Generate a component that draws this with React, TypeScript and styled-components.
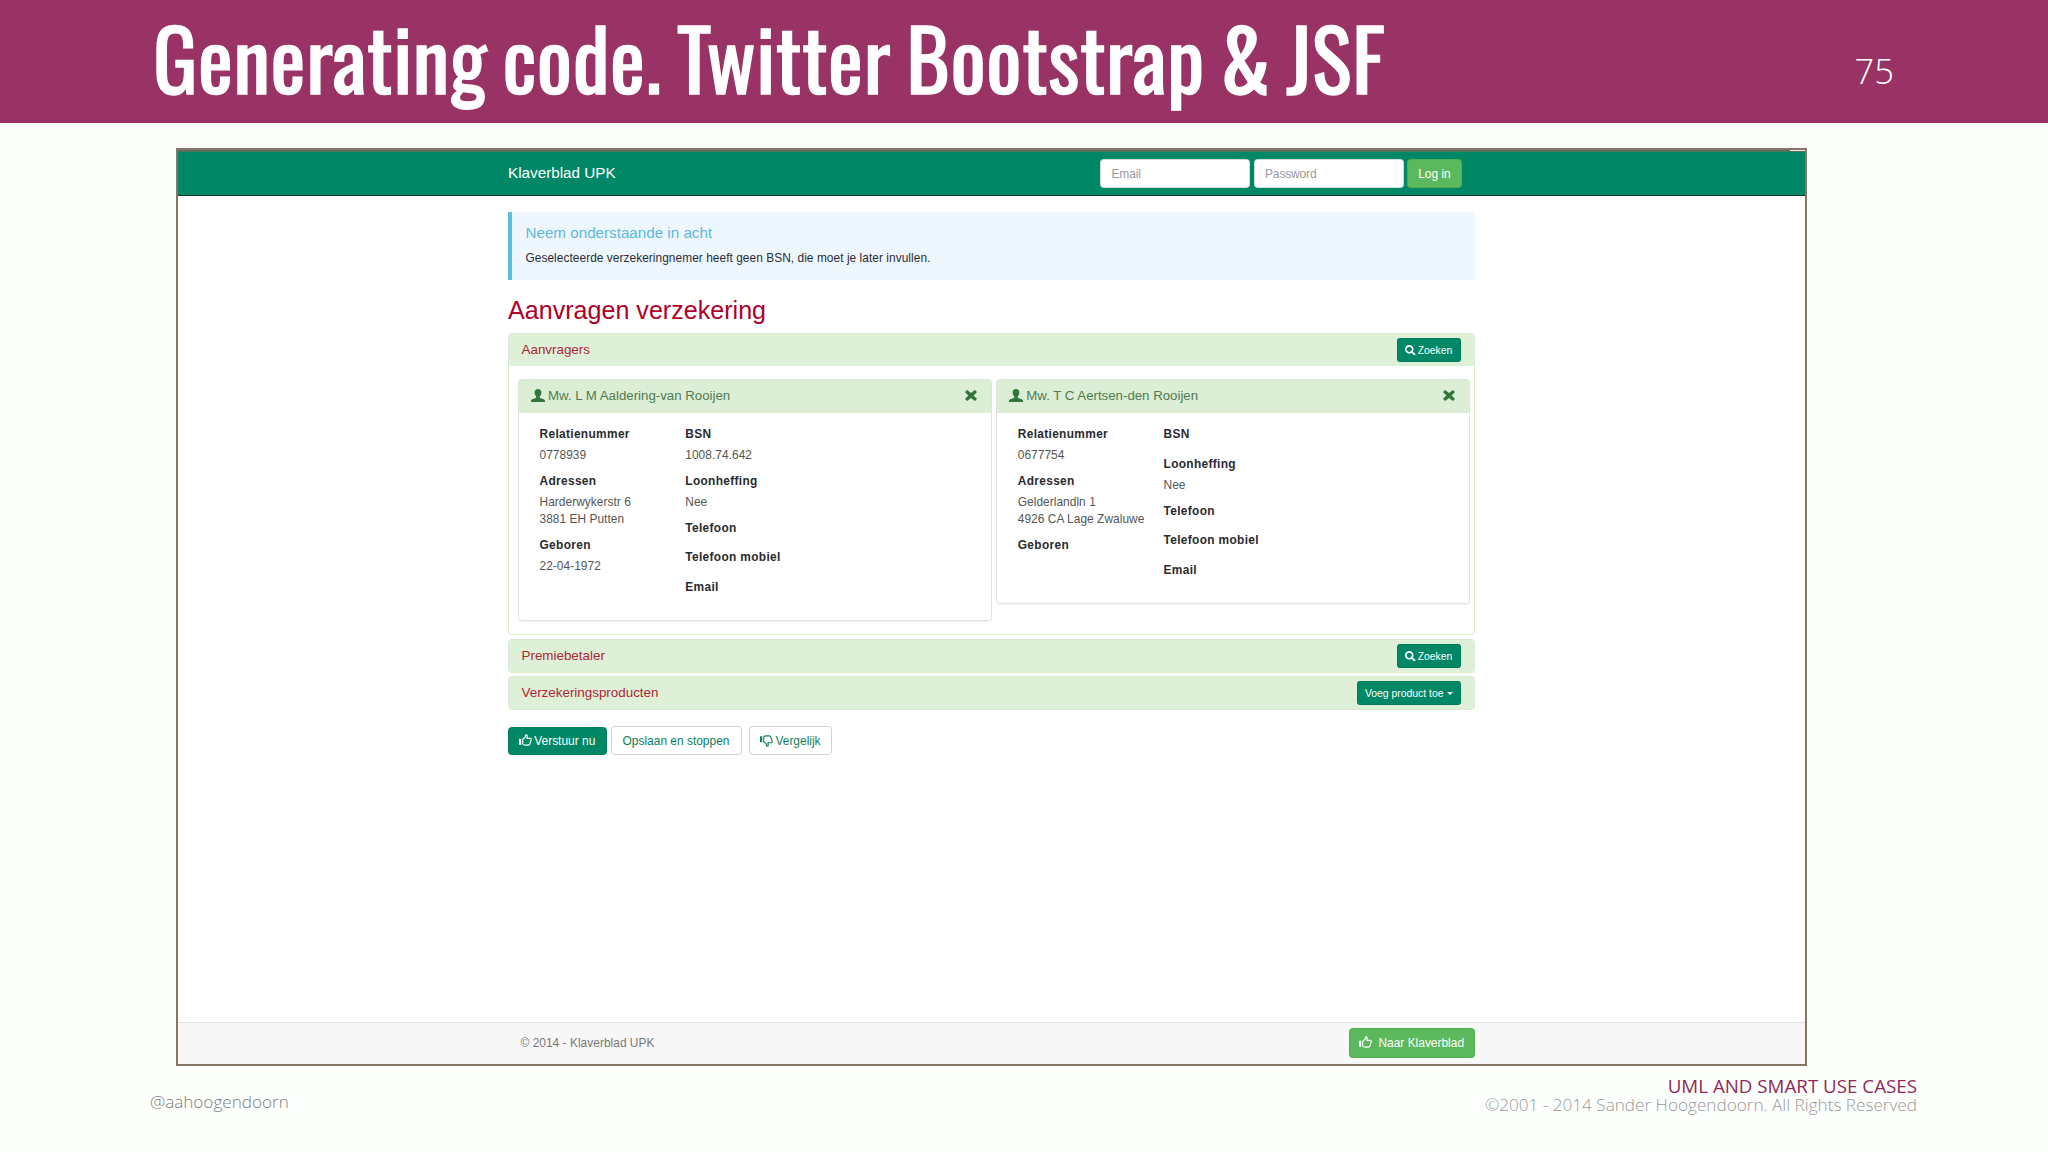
import React from 'react';
import styled, { createGlobalStyle } from 'styled-components';
import { FaSearch } from 'react-icons/fa';

const GlobalStyle = createGlobalStyle`
  * { box-sizing: border-box; }
  body { margin: 0; background: #fdfffd; }
  h1, h2, h3, h4, p, dl, dt, dd { margin: 0; font-weight: 400; }
`;

const sans = '"Liberation Sans", Arial, sans-serif';
const openSans = '"Open Sans", sans-serif';

/* ---------- slide ---------- */
const Slide = styled.div`
  width: 2048px;
  height: 1152px;
  overflow: hidden;
  display: flex;
  flex-direction: column;
  background: #fdfffd;
`;
const SlideHeader = styled.header`
  height: 123px;
  padding: 0 154px 0 153px;
  display: flex;
  justify-content: space-between;
  background: #993265;
  color: #fff;
`;
const SlideTitle = styled.h1`
  font: 400 83px/113px Oswald, "Open Sans", sans-serif;
  letter-spacing: 0.6px;
  word-spacing: -4.2px;
  -webkit-text-stroke: 1.3px #fff;
  white-space: nowrap;
`;
const PageNumber = styled.span`
  font: 300 34.5px/142px ${openSans};
`;
const SlideFooter = styled.footer`
  display: flex;
  justify-content: space-between;
  padding: 11px 131px 0 150px;
`;
const Handle = styled.span`
  margin-top: 11.5px;
  font: 300 17.1px/26px ${openSans};
  color: #7c7e7c;
`;
const Credits = styled.div`
  text-align: right;
  font: 300 17.15px/18px ${openSans};
  color: #9b989e;
`;
const Course = styled.p`
  font-size: 18.75px;
  line-height: 18.5px;
  color: #8f2a58;
`;

/* ---------- browser page ---------- */
const Frame = styled.main`
  flex: none;
  width: 1631px;
  height: 918px;
  margin: 25px 0 0 176px;
  border: 2px solid #857767;
  display: flex;
  flex-direction: column;
  background: #fefffe;
  font: 11.9px/17px ${sans};
  color: #333;
`;
const TopEdge = styled.div`
  flex: none;
  height: 2px;
  display: flex;
  justify-content: flex-end;
  background: #55705c;
  &::after { content: ''; width: 15px; height: 1px; background: #f4e6dc; }
`;
const Container = styled.div`
  width: 967px;
  margin: 0 auto;
`;
const Navbar = styled.nav`
  flex: none;
  height: 44px;
  background: #008866;
  border-bottom: 1px solid #10382e;
`;
const NavRow = styled(Container)`
  height: 43px;
  padding: 0 13px 0 0;
  display: flex;
  align-items: center;
  gap: 3.5px;
`;
const Brand = styled.span`
  margin-right: auto;
  padding-bottom: 2px;
  font-size: 15.25px;
  color: #fff;
`;
const Input = styled.input`
  width: 150px;
  height: 29px;
  padding: 0 10.5px;
  border: 1px solid #d5ddd9;
  border-radius: 3.5px;
  background: #fff;
  font: 12px/17px ${sans};
  letter-spacing: -0.15px;
  &::placeholder { color: #999; opacity: 1; }
`;

type Tone = 'green' | 'success' | 'plain';
const tones: Record<Tone, [string, string, string]> = {
  green: ['#008866', '#007d5c', '#fff'],
  success: ['#5cb85c', '#4fae50', '#fff'],
  plain: ['#fff', '#d0d2d0', '#0d805f'],
};
const Button = styled.button<{ $tone: Tone; $w: number; $h: number; $small?: boolean; $gap?: number }>`
  flex: none;
  width: ${p => p.$w}px;
  height: ${p => p.$h}px;
  padding: ${p => (p.$small ? 0 : 1)}px 0 0;
  display: inline-flex;
  align-items: center;
  justify-content: center;
  gap: ${p => p.$gap ?? 2}px;
  border: 1px solid ${p => tones[p.$tone][1]};
  border-radius: ${p => (p.$small ? 2.5 : 3.5)}px;
  background: ${p => tones[p.$tone][0]};
  color: ${p => tones[p.$tone][2]};
  font: ${p => (p.$small ? 10.4 : 11.95)}px/17px ${sans};
  white-space: nowrap;
`;
const Caret = styled.i`
  margin-left: 1px;
  border: 3px solid transparent;
  border-top-color: currentColor;
  border-bottom: 0;
`;

const Callout = styled.section`
  height: 67.5px;
  margin-top: 16px;
  padding: 12px 13.5px;
  border-left: 4.5px solid #5bc0de;
  background: #eef7fd;
  color: #2c2c34;
`;
const CalloutTitle = styled.h4`
  margin-bottom: 9px;
  font-size: 15.2px;
  line-height: 17px;
  color: #5db9dc;
`;
const CalloutText = styled.p`
  letter-spacing: 0.05px;
  line-height: 17px;
`;
const PageTitle = styled.h2`
  margin: 16.5px 0 9px;
  font-size: 25.1px;
  line-height: 28px;
  color: #b00028;
`;

const Panel = styled.section`
  margin-bottom: 3px;
  border: 1px solid #dbe8d2;
  border-radius: 3.5px;
  &:has(article) { margin-bottom: 4px; }
`;
const PanelHeading = styled.header`
  height: 32px;
  padding: 0 13px 0 12.5px;
  display: flex;
  align-items: center;
  justify-content: space-between;
  background: #dff0d8;
  border-radius: 2.5px;
`;
const PanelTitle = styled.h3`
  padding-bottom: 1px;
  font-size: 13.4px;
  color: #ab2635;
`;
const PanelBody = styled.div`
  height: 268px;
  padding: 12.5px 4px 0 8.5px;
  display: flex;
  align-items: flex-start;
  gap: 4px;
`;

const Card = styled.article`
  flex: 1;
  border: 1px solid #dfe5da;
  border-radius: 3.5px;
  box-shadow: 0 1px 1px rgba(0, 0, 0, 0.06);
`;
const CardHeading = styled.header`
  height: 33px;
  padding: 0 14px 1px 12.5px;
  display: flex;
  align-items: center;
  background: #dcefd6;
  color: #32763a;
`;
const CardTitle = styled.h4`
  flex: 1;
  margin-left: 3px;
  font-size: 13.25px;
  color: #50794f;
`;
const CardBody = styled.div`
  padding: 13.5px 21px 11px;
  display: flex;
`;
const Fields = styled.dl`
  width: 145.8px;
  display: flex;
  flex-direction: column;
`;
const Label = styled.dt`
  margin-bottom: 4.25px;
  font-weight: 700;
  letter-spacing: 0.34px;
  white-space: nowrap;
  color: #2b2b30;
`;
const Value = styled.dd`
  margin-bottom: 8.5px;
  letter-spacing: 0.05px;
  white-space: nowrap;
  color: #555;
`;

const Actions = styled.div`
  margin-top: 16px;
  display: flex;
  align-items: center;
`;
const Gap = styled.span<{ $w: number }>`
  width: ${p => p.$w}px;
`;

const PageFooter = styled.footer`
  flex: none;
  height: 42px;
  margin-top: auto;
  background: #f7f7f8;
  border-top: 1px solid #e3e3e5;
`;
const FooterRow = styled(Container)`
  height: 41px;
  padding: 0 0 1px 12.5px;
  display: flex;
  align-items: center;
  justify-content: space-between;
  letter-spacing: 0.04px;
  color: #777;
`;

const UserIcon = () => (
  <svg width="14" height="13" viewBox="0 0 14 13" fill="currentColor">
    <path d="M7 0C4.9 0 3.6 1.3 3.6 3.2c0 1.900.6 3.200 1.600 4.100v1c0 .5-.3.8-.8 1L1.200 10.300C.4 10.700 0 11.200 0 12V13h14v-1c0-.8-.4-1.300-1.200-1.700L9.600 9.300c-.5-.2-.8-.5-.8-1v-1c1-.9 1.600-2.200 1.600-4.100C10.400 1.300 9.100 0 7 0z" />
  </svg>
);
const RemoveIcon = () => (
  <svg width="12" height="11" viewBox="0 0 12 11" fill="currentColor">
    <path d="M2.500.2 6 3.100 9.500.2Q9.900 0 10.200.2L11.700 1.700Q12 2 11.700 2.400L8.600 5.500 11.700 8.600Q12 9 11.700 9.300L10.200 10.800Q9.900 11 9.500 10.800L6 7.900 2.500 10.800Q2.100 11 1.800 10.800L.3 9.300Q0 9 .3 8.600L3.400 5.500.3 2.400Q0 2 .3 1.700L1.800.2Q2.100 0 2.500.2z" />
  </svg>
);
const ThumbSvg = styled.svg<{ $down?: boolean }>`
  margin-bottom: ${p => (p.$down ? 1 : 3)}px;
  transform: ${p => (p.$down ? 'scaleY(-1)' : 'none')};
`;
const ThumbIcon = ({ down }: { down?: boolean }) => (
  <ThumbSvg $down={down} width="13" height="12" viewBox="0 0 13 12" fill="none" stroke="currentColor" strokeWidth="1.15" strokeLinejoin="round">
    <path d="M0 4.800h2.200v6H0z" fill="currentColor" stroke="none" />
    <path d="M3.700 5.300 6.200 3.100 6.600 1.100Q7.900.3 8.300 1.900L7.800 4.300H11.200Q12.500 4.600 12.200 5.900L10.900 9.900Q10.500 11.100 9.400 11.100H6Q5 11.100 3.700 10.100z" />
  </ThumbSvg>
);

type Field = [string, string[]];
interface Person { name: string; left: Field[]; right: Field[] }

const people: Person[] = [
  {
    name: 'Mw. L M Aaldering-van Rooijen',
    left: [
      ['Relatienummer', ['0778939']],
      ['Adressen', ['Harderwykerstr 6', '3881 EH Putten']],
      ['Geboren', ['22-04-1972']],
    ],
    right: [['BSN', ['1008.74.642']], ['Loonheffing', ['Nee']], ['Telefoon', []], ['Telefoon mobiel', []], ['Email', []]],
  },
  {
    name: 'Mw. T C Aertsen-den Rooijen',
    left: [
      ['Relatienummer', ['0677754']],
      ['Adressen', ['Gelderlandln 1', '4926 CA Lage Zwaluwe']],
      ['Geboren', []],
    ],
    right: [['BSN', []], ['Loonheffing', ['Nee']], ['Telefoon', []], ['Telefoon mobiel', []], ['Email', []]],
  },
];

const FieldList = ({ fields }: { fields: Field[] }) => (
  <Fields>
    {fields.map(([label, lines]) => (
      <React.Fragment key={label}>
        <Label>{label}</Label>
        <Value>{lines.map(line => <div key={line}>{line}</div>)}</Value>
      </React.Fragment>
    ))}
  </Fields>
);

const SearchButton = () => (
  <Button $tone="green" $w={64.5} $h={24} $small>
    <FaSearch size={10.5} />Zoeken
  </Button>
);

export default function App() {
  return (
    <Slide>
      <GlobalStyle />
      <SlideHeader>
        <SlideTitle>Generating code. Twitter Bootstrap &amp; JSF</SlideTitle>
        <PageNumber>75</PageNumber>
      </SlideHeader>

      <Frame>
        <TopEdge />
        <Navbar>
          <NavRow>
            <Brand>Klaverblad UPK</Brand>
            <Input placeholder="Email" />
            <Input placeholder="Password" />
            <Button $tone="success" $w={55} $h={29}>Log in</Button>
          </NavRow>
        </Navbar>

        <Container>
          <Callout>
            <CalloutTitle>Neem onderstaande in acht</CalloutTitle>
            <CalloutText>Geselecteerde verzekeringnemer heeft geen BSN, die moet je later invullen.</CalloutText>
          </Callout>
          <PageTitle>Aanvragen verzekering</PageTitle>

          <Panel>
            <PanelHeading>
              <PanelTitle>Aanvragers</PanelTitle>
              <SearchButton />
            </PanelHeading>
            <PanelBody>
              {people.map(person => (
                <Card key={person.name}>
                  <CardHeading>
                    <UserIcon />
                    <CardTitle>{person.name}</CardTitle>
                    <RemoveIcon />
                  </CardHeading>
                  <CardBody>
                    <FieldList fields={person.left} />
                    <FieldList fields={person.right} />
                  </CardBody>
                </Card>
              ))}
            </PanelBody>
          </Panel>
          <Panel>
            <PanelHeading>
              <PanelTitle>Premiebetaler</PanelTitle>
              <SearchButton />
            </PanelHeading>
          </Panel>
          <Panel>
            <PanelHeading>
              <PanelTitle>Verzekeringsproducten</PanelTitle>
              <Button $tone="green" $w={104.5} $h={24} $small>
                Voeg product toe<Caret />
              </Button>
            </PanelHeading>
          </Panel>

          <Actions>
            <Button $tone="green" $w={98.5} $h={28}><ThumbIcon />Verstuur nu</Button>
            <Gap $w={4} />
            <Button $tone="plain" $w={131} $h={29}>Opslaan en stoppen</Button>
            <Gap $w={7.5} />
            <Button $tone="plain" $w={83} $h={29}><ThumbIcon down />Vergelijk</Button>
          </Actions>
        </Container>

        <PageFooter>
          <FooterRow>
            <span>© 2014 - Klaverblad UPK</span>
            <Button $tone="success" $w={126.5} $h={29.5} $gap={6}><ThumbIcon />Naar Klaverblad</Button>
          </FooterRow>
        </PageFooter>
      </Frame>

      <SlideFooter>
        <Handle>@aahoogendoorn</Handle>
        <Credits>
          <Course>UML AND SMART USE CASES</Course>
          ©2001 - 2014 Sander Hoogendoorn. All Rights Reserved
        </Credits>
      </SlideFooter>
    </Slide>
  );
}
